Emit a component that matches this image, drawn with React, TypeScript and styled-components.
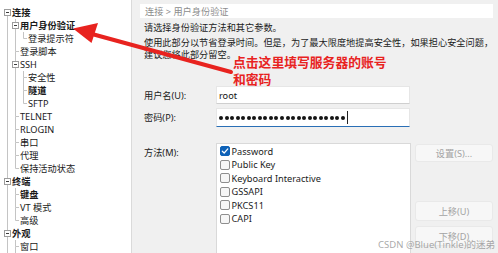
import React from "react";
import styled, { createGlobalStyle } from "styled-components";

const GlobalStyle = createGlobalStyle`
	html, body {
		margin: 0;
		padding: 0;
	}
	body {
		width: 498px;
		height: 253px;
		overflow: hidden;
		background: #f0f0f0;
		font-family: "Noto Sans", "Noto Sans CJK SC", sans-serif;
		font-size: 9.2px;
		color: #1b1b1b;
	}
`;

type TreeNode = { label: string; level: number; bold?: boolean; open?: boolean };

const TREE: TreeNode[] = [
	{ label: "连接", level: 1, bold: true, open: true },
	{ label: "用户身份验证", level: 2, bold: true, open: true },
	{ label: "登录提示符", level: 3 },
	{ label: "登录脚本", level: 2 },
	{ label: "SSH", level: 2, open: true },
	{ label: "安全性", level: 3 },
	{ label: "隧道", level: 3, bold: true },
	{ label: "SFTP", level: 3 },
	{ label: "TELNET", level: 2 },
	{ label: "RLOGIN", level: 2 },
	{ label: "串口", level: 2 },
	{ label: "代理", level: 2 },
	{ label: "保持活动状态", level: 2 },
	{ label: "终端", level: 1, bold: true, open: true },
	{ label: "键盘", level: 2, bold: true },
	{ label: "VT 模式", level: 2 },
	{ label: "高级", level: 2 },
	{ label: "外观", level: 1, bold: true, open: true },
	{ label: "窗口", level: 2 },
];

const METHODS = [
	{ label: "Password", checked: true },
	{ label: "Public Key" },
	{ label: "Keyboard Interactive" },
	{ label: "GSSAPI" },
	{ label: "PKCS11" },
	{ label: "CAPI" },
];

// does the item have a later sibling at the same level?
// the tree scrolls on past the last visible row, so the end counts as "more below"
const hasNext = (i: number): boolean => {
	const lvl = TREE[i].level;
	for (let j = i + 1; j < TREE.length; j++) {
		if (TREE[j].level < lvl) return false;
		if (TREE[j].level === lvl) return true;
	}
	return true;
};

const ancestorContinues = (i: number, level: number): boolean => {
	for (let j = i - 1; j >= 0; j--) {
		if (TREE[j].level === level) return hasNext(j);
		if (TREE[j].level < level) return false;
	}
	return false;
};

const ROW_H = 13;
const MID = 6.5;
const colX = (c: number) => 7.5 + 8 * c;

const Frame = styled.div`
	position: relative;
	display: flex;
	width: 498px;
	height: 253px;
	overflow: hidden;
`;

const TreePanel = styled.div`
	width: 132px;
	flex-shrink: 0;
	box-sizing: border-box;
	background: #fff;
	border-right: 1px solid #dadada;
	padding-top: 6px;
	overflow: hidden;
`;

const TreeRow = styled.div<{ $bold?: boolean }>`
	display: flex;
	align-items: center;
	height: ${ROW_H}px;
	line-height: ${ROW_H}px;
	white-space: nowrap;
	font-weight: ${(p) => (p.$bold ? 700 : 400)};
	color: #1a1a1a;
`;

const GuideSvg = styled.svg`
	flex-shrink: 0;
	display: block;
`;

const TreeGuide = ({ index }: { index: number }) => {
	const node = TREE[index];
	const col = node.level - 1;
	const width = 12 + 8 * col;
	const cx = colX(col);
	const stroke = "#c4c4c4";
	const next = hasNext(index);
	const parts: React.ReactNode[] = [];

	for (let c = 0; c < col; c++) {
		if (ancestorContinues(index, c + 1)) {
			parts.push(<line key={`a${c}`} x1={colX(c)} y1={0} x2={colX(c)} y2={ROW_H} stroke={stroke} />);
		}
	}

	const top = node.open ? 3.5 : MID;
	const bottom = node.open ? 9.5 : MID;
	if (index > 0) parts.push(<line key="up" x1={cx} y1={0} x2={cx} y2={top} stroke={stroke} />);
	if (next) parts.push(<line key="dn" x1={cx} y1={bottom} x2={cx} y2={ROW_H} stroke={stroke} />);
	parts.push(
		<line key="h" x1={node.open ? cx + 3 : cx} y1={MID} x2={width - 1} y2={MID} stroke={stroke} />
	);
	if (node.open) {
		parts.push(
			<rect key="box" x={cx - 3} y={3.5} width={6} height={6} fill="#fff" stroke="#9c9c9c" />,
			<line key="minus" x1={cx - 1.5} y1={MID} x2={cx + 1.5} y2={MID} stroke="#3c3c3c" />
		);
	}

	return (
		<GuideSvg width={width} height={ROW_H} viewBox={`0 0 ${width} ${ROW_H}`}>
			{parts}
		</GuideSvg>
	);
};

const Content = styled.div`
	flex: 1;
	display: flex;
	flex-direction: column;
	padding: 4px 5px 0 8px;
	min-width: 0;
`;

const Breadcrumb = styled.div`
	height: 19px;
	background: #fff;
	color: #8c8c8c;
	padding-left: 5px;
	display: flex;
	align-items: center;
`;

const Intro = styled.div`
	padding-left: 4px;
	margin-top: 4px;
	white-space: nowrap;
`;

const Para = styled.p<{ $gap?: number }>`
	margin: ${(p) => p.$gap ?? 0}px 0 0;
	line-height: ${(p) => (p.$gap ? 11.5 : 12)}px;
`;

const Form = styled.div`
	margin-top: 26px;
	padding-left: 4px;
	display: flex;
	flex-direction: column;
`;

const FieldRow = styled.div<{ $gap?: number }>`
	display: flex;
	align-items: center;
	margin-top: ${(p) => p.$gap ?? 0}px;
`;

const Label = styled.div`
	width: 72px;
	flex-shrink: 0;
	line-height: 13px;
`;

const TextBox = styled.div<{ $focused?: boolean }>`
	width: 194px;
	height: ${(p) => (p.$focused ? 19 : 18)}px;
	box-sizing: border-box;
	background: #fff;
	border: 1px solid #e6e6e6;
	border-bottom: 1px solid ${(p) => (p.$focused ? "#2a6fb6" : "#cfcfcf")};
	display: flex;
	align-items: center;
	padding-left: 2px;
	color: #111;
`;

const Dots = styled.div`
	display: flex;
	align-items: center;
	gap: 1.55px;
`;

const Dot = styled.span`
	width: 4px;
	height: 4px;
	border-radius: 50%;
	background: #151515;
`;

const Caret = styled.span`
	width: 1px;
	height: 13px;
	margin-left: 1.5px;
	background: #222;
`;

const MethodRow = styled.div`
	display: flex;
	align-items: flex-start;
	margin-top: 16px;
`;

const MethodLabel = styled(Label)`
	padding-top: 3px;
`;

const ListBox = styled.div`
	width: 195px;
	height: 112px;
	box-sizing: border-box;
	background: #fff;
	border: 1px solid #d9d9d9;
	padding: 0.5px 0 0 3px;
	flex-shrink: 0;
`;

const CheckRow = styled.div`
	display: flex;
	align-items: center;
	height: 13.5px;
	gap: 1.5px;
	white-space: nowrap;
`;

const Box = styled.span<{ $checked?: boolean }>`
	width: 10px;
	height: 10px;
	box-sizing: border-box;
	border-radius: 2px;
	border: 1px solid ${(p) => (p.$checked ? "#0f62b8" : "#8e8e8e")};
	background: ${(p) => (p.$checked ? "#0f62b8" : "#f6f6f6")};
	display: flex;
	align-items: center;
	justify-content: center;
	flex-shrink: 0;
`;

const ButtonStack = styled.div`
	display: flex;
	flex-direction: column;
	margin-left: 4px;
	padding-top: 1px;
	width: 78px;
`;

const MoveGroup = styled.div`
	display: flex;
	flex-direction: column;
	gap: 5px;
	margin-top: 39px;
`;

const Button = styled.div<{ $h?: number }>`
	height: ${(p) => p.$h ?? 20}px;
	box-sizing: border-box;
	background: #f7f7f7;
	border: 1px solid #e9e9e9;
	border-radius: 3px;
	color: #a3a3a3;
	display: flex;
	align-items: center;
	justify-content: center;
`;

const Overlay = styled.svg`
	position: absolute;
	inset: 0;
	pointer-events: none;
`;

const Callout = styled.div`
	position: absolute;
	left: 233px;
	top: 53px;
	font-family: "Noto Sans CJK SC", sans-serif;
	font-weight: 700;
	font-size: 12.8px;
	line-height: 17px;
	color: #e8231f;
	white-space: nowrap;
`;

const Watermark = styled.div`
	position: absolute;
	right: 3px;
	bottom: 2px;
	font-family: "Noto Sans", "Noto Sans CJK SC", sans-serif;
	font-size: 9.5px;
	color: rgba(140, 140, 140, 0.75);
	white-space: nowrap;
`;

const Check = () => (
	<svg width="8" height="8" viewBox="0 0 8 8">
		<path d="M1.3 4.2 L3.2 6 L6.8 1.9" fill="none" stroke="#fff" strokeWidth="1.2" strokeLinecap="round" strokeLinejoin="round" />
	</svg>
);

export default function App() {
	return (
		<>
			<GlobalStyle />
			<Frame>
				<TreePanel>
					{TREE.map((node, i) => (
						<TreeRow key={i} $bold={node.bold}>
							<TreeGuide index={i} />
							{node.label}
						</TreeRow>
					))}
				</TreePanel>

				<Content>
					<Breadcrumb>连接 &gt; 用户身份验证</Breadcrumb>
					<Intro>
						<Para>请选择身份验证方法和其它参数。</Para>
						<Para $gap={3}>
							使用此部分以节省登录时间。但是，为了最大限度地提高安全性，如果担心安全问题，
							<br />
							建议您将此部分留空。
						</Para>
					</Intro>

					<Form>
						<FieldRow>
							<Label>用户名(U):</Label>
							<TextBox>root</TextBox>
						</FieldRow>
						<FieldRow $gap={4}>
							<Label>密码(P):</Label>
							<TextBox $focused>
								<Dots>
									{Array.from({ length: 23 }).map((_, i) => (
										<Dot key={i} />
									))}
								</Dots>
								<Caret />
							</TextBox>
						</FieldRow>
						<MethodRow>
							<MethodLabel>方法(M):</MethodLabel>
							<ListBox>
								{METHODS.map((m) => (
									<CheckRow key={m.label}>
										<Box $checked={m.checked}>{m.checked && <Check />}</Box>
										{m.label}
									</CheckRow>
								))}
							</ListBox>
							<ButtonStack>
								<Button $h={18}>设置(S)...</Button>
								<MoveGroup>
									<Button>上移(U)</Button>
									<Button>下移(D)</Button>
								</MoveGroup>
							</ButtonStack>
						</MethodRow>
					</Form>
				</Content>

				<Overlay width="498" height="253" viewBox="0 0 498 253">
					<line x1="231" y1="72" x2="92" y2="34" stroke="#e8231f" strokeWidth="4" strokeLinecap="round" />
					<polygon points="73,28.5 98,23 91.5,43" fill="#e8231f" />
				</Overlay>
				<Callout>
					点击这里填写服务器的账号
					<br />
					和密码
				</Callout>
				<Watermark>CSDN @Blue(Tinkle)的迷弟</Watermark>
			</Frame>
		</>
	);
}
